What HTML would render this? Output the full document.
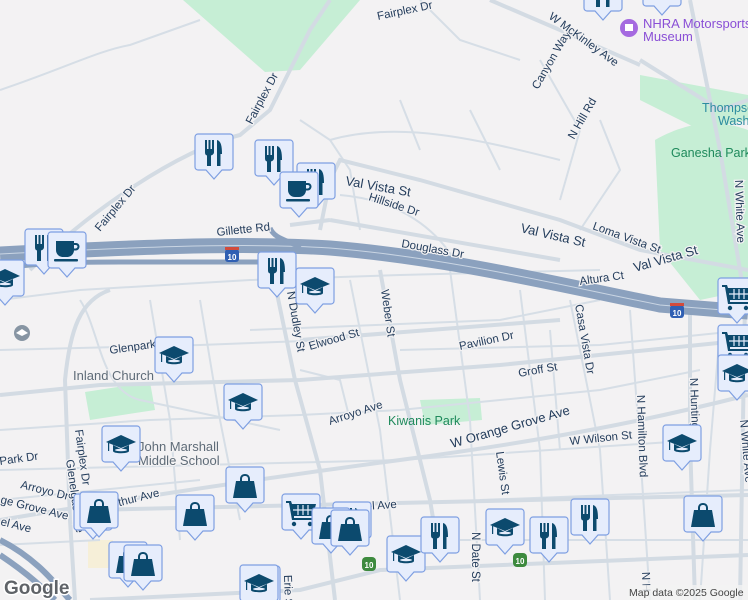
<!DOCTYPE html>
<html><head><meta charset="utf-8"><style>
html,body{margin:0;padding:0;width:748px;height:600px;overflow:hidden;background:#f3f2f3}
svg{display:block;overflow:hidden}
text{font-family:"Liberation Sans",sans-serif}
.l{fill:#243d5c;font-size:11.5px;stroke:#f3f2f3;stroke-width:2.5px;paint-order:stroke}
.r{fill:none;stroke:#d6dee6;stroke-width:2}
.m{fill:none;stroke:#d3dbe3;stroke-width:4}
</style></head><body>
<svg width="748" height="600" viewBox="0 0 748 600" xmlns="http://www.w3.org/2000/svg">
<defs>
<clipPath id="c"><rect width="748" height="600"/></clipPath>
<g id="pin"><path d="M3,0H35a3,3 0 0 1 3,3V33a3,3 0 0 1-3,3H27L19,45L11,36H3a3,3 0 0 1-3-3V3a3,3 0 0 1 3-3z" fill="#e6edfc" stroke="#7e9fe2" stroke-width="1.2"/></g>
<g id="fork"><use href="#pin"/><g fill="#0c4a6e"><path d="M10,6h2v9h1.5V6h2v9h1.5V6h2v12c0,2-1.5,3-3,3.5V32h-4V21.5c-1.5-.5-2-1.5-2-3.5z"/><path d="M22,6c4,1 5,6 5,14h-1.5V32h-3.5z"/></g></g>
<g id="cup"><use href="#pin"/><g fill="#0c4a6e"><path d="M8,9h18v9c0,4-3,7-7,7h-4c-4,0-7-3-7-7z"/><path d="M26,11h2c2.5,0 3.5,2 3.5,3.5s-1,4-4,4h-2v-2h2c1,0 2-1 2-2s-1-1.5-2-1.5h-1.5z"/><rect x="6" y="27" width="24" height="2.5" rx="1"/></g></g>
<g id="edu"><use href="#pin"/><g fill="#0c4a6e"><path d="M19,9L34,16L19,22L4,16z"/><path d="M11,19v6c0,3 16,3 16,0v-6l-8,4z"/><rect x="6" y="17" width="1.2" height="8"/></g><ellipse cx="19" cy="24" rx="6" ry="1.3" fill="#e6edfc"/></g>
<g id="bag"><use href="#pin"/><g fill="#0c4a6e"><path d="M10,14h18l3,17H7z"/><path d="M14,15v-3c0-3 2-5 5-5s5,2 5,5v3h-2v-3c0-2-1-3-3-3s-3,1-3,3v3z"/></g></g>
<g id="cart"><use href="#pin"/><g fill="#0c4a6e"><path d="M4,7h5l1,3h24l-3,12H12v2h18v2H10l-3-17H4z"/><circle cx="12" cy="30" r="2.2"/><circle cx="28" cy="30" r="2.2"/></g><g stroke="#e6edfc" stroke-width="1.2"><path d="M16,11v10M21,11v10M26,11v10M11,16h21"/></g></g>
</defs>
<g clip-path="url(#c)">
<rect width="748" height="600" fill="#f3f2f3"/>
<path d="M183,0H360L300,70L265,72z" fill="#c6eed5"/>
<path d="M655,140C690,120 720,120 748,130V290L700,300L660,250z" fill="#c6eed5"/>
<path d="M640,75L748,95V120L700,130L640,100z" fill="#c6eed5"/>
<path d="M85,392L150,382L155,410L90,420z" fill="#c6eed5"/>
<path d="M420,400L480,398L482,420L425,425z" fill="#c6eed5"/>
<rect x="88" y="540" width="25" height="28" fill="#f6efd8"/>
<g class="r">
<path d="M0,90C60,70 100,50 130,45L200,20"/><path d="M0,300L80,290L250,280L400,275L600,270"/>
<path d="M80,300C100,330 100,390 140,400L280,430"/><path d="M0,350L200,345L330,340"/>
<path d="M0,430L150,420L300,415L400,410L500,400L600,390L700,370"/>
<path d="M200,300L220,420L240,520"/><path d="M350,280L380,430L400,600"/>
<path d="M450,270L470,420L480,600"/><path d="M520,290L540,450L545,600"/>
<path d="M570,300L600,450L610,600"/><path d="M630,310L640,450L650,600"/>
<path d="M150,300L170,420L180,540"/><path d="M0,500L100,490L200,480"/>
<path d="M300,120L330,140L350,170L360,230"/><path d="M330,140C400,120 480,140 560,160"/>
<path d="M340,195C400,200 440,230 460,270"/><path d="M400,100L420,150"/>
<path d="M470,110L500,170"/><path d="M540,60L580,130L560,200"/>
<path d="M600,120L620,170L580,230"/><path d="M420,0L460,40L520,60"/>
<path d="M0,470L400,460L700,440"/><path d="M0,545L100,540"/>
<path d="M250,330L500,320L600,300"/><path d="M400,350L600,345L748,330"/>
<path d="M550,330L560,450"/><path d="M480,500L748,490"/><path d="M460,540L748,540"/>
<path d="M300,370L340,380L350,420"/><path d="M720,330L710,450L700,600"/>
</g>
<g class="m">
<path d="M0,520C120,500 250,480 400,460C550,440 650,420 748,395"/>
<path d="M90,600L300,590L380,570L748,555"/>
<path d="M90,510L748,495"/>
<path d="M270,260L295,380L320,470L335,600"/>
<path d="M380,270L400,380L430,500L440,560"/>
<path d="M110,290C80,300 70,330 65,380L70,520L75,600"/>
<path d="M30,270C90,210 180,150 240,135L270,110L310,30L330,0"/>
<path d="M320,230L330,180L340,160L420,180L560,220L640,250L748,270"/>
<path d="M290,225L330,220"/><path d="M330,220L560,260"/>
<path d="M0,395L100,385L300,380L500,365L748,340"/>
<path d="M300,340L560,320"/><path d="M640,60L720,110L748,100"/>
<path d="M490,0L560,30L640,65"/><path d="M690,0L720,150L745,300L740,600"/>
<path d="M690,310L690,440L695,600"/>
</g>
<path d="M0,254C120,248 240,242 330,248C450,258 560,285 660,305L748,312" fill="none" stroke="#8ba1be" stroke-width="15"/>
<path d="M0,254C120,248 240,242 330,248C450,258 560,285 660,305L748,312" fill="none" stroke="#c9d5e3" stroke-width="1"/>
<path d="M0,268C50,262 90,262 120,262L260,262" fill="none" stroke="#8ba1be" stroke-width="5"/>
<path d="M270,228C275,240 290,240 300,248" fill="none" stroke="#8ba1be" stroke-width="5"/>
<path d="M0,540C40,560 60,590 70,600M0,555C30,575 45,590 55,600" fill="none" stroke="#8ba1be" stroke-width="6"/>
<g><rect x="225" y="249" width="14" height="13" rx="3" fill="#2f5fb3"/><rect x="225" y="247" width="14" height="3" fill="#d24b3c"/><text x="232" y="260" font-size="8" fill="#fff" text-anchor="middle" font-weight="bold">10</text></g>
<g><rect x="670" y="305" width="14" height="13" rx="3" fill="#2f5fb3"/><rect x="670" y="303" width="14" height="3" fill="#d24b3c"/><text x="677" y="316" font-size="8" fill="#fff" text-anchor="middle" font-weight="bold">10</text></g>
<g><rect x="362" y="557" width="14" height="14" rx="4" fill="#3d8a3e"/><text x="369" y="568" font-size="8" fill="#fff" text-anchor="middle" font-weight="bold">10</text></g>
<g><rect x="513" y="553" width="14" height="14" rx="4" fill="#3d8a3e"/><text x="520" y="564" font-size="8" fill="#fff" text-anchor="middle" font-weight="bold">10</text></g>
<text class="l" transform="translate(378,20) rotate(-12)">Fairplex Dr</text>
<text class="l" transform="translate(252,125) rotate(-62)">Fairplex Dr</text>
<text class="l" transform="translate(100,232) rotate(-50)">Fairplex Dr</text>
<text class="l" transform="translate(217,236) rotate(-6)">Gillette Rd</text>
<text class="l" transform="translate(345,185) rotate(10)" style="font-size:13px">Val Vista St</text>
<text class="l" transform="translate(368,200) rotate(18)">Hillside Dr</text>
<text class="l" transform="translate(401,247) rotate(10)">Douglass Dr</text>
<text class="l" transform="translate(520,232) rotate(13)" style="font-size:13px">Val Vista St</text>
<text class="l" transform="translate(592,229) rotate(20)">Loma Vista St</text>
<text class="l" transform="translate(635,272) rotate(-16)" style="font-size:13px">Val Vista St</text>
<text class="l" transform="translate(580,285) rotate(-8)">Altura Ct</text>
<text class="l" transform="translate(381,290) rotate(82)">Weber St</text>
<text class="l" transform="translate(287,292) rotate(80)">N Dudley St</text>
<text class="l" transform="translate(310,350) rotate(-16)">Elwood St</text>
<text class="l" transform="translate(110,354) rotate(-8)">Glenpark St</text>
<text class="l" transform="translate(460,350) rotate(-12)">Pavilion Dr</text>
<text class="l" transform="translate(519,377) rotate(-10)">Groff St</text>
<text class="l" transform="translate(330,425) rotate(-18)">Arroyo Ave</text>
<text class="l" transform="translate(452,448) rotate(-16)" style="font-size:13px">W Orange Grove Ave</text>
<text class="l" transform="translate(570,445) rotate(-6)">W Wilson St</text>
<text class="l" transform="translate(496,452) rotate(82)">Lewis St</text>
<text class="l" transform="translate(575,305) rotate(80)">Casa Vista Dr</text>
<text class="l" transform="translate(637,395) rotate(88)">N Hamilton Blvd</text>
<text class="l" transform="translate(690,378) rotate(88)">N Huntington</text>
<text class="l" transform="translate(740,420) rotate(85)">N White Ave</text>
<text class="l" transform="translate(735,180) rotate(88)">N White Ave</text>
<text class="l" transform="translate(538,90) rotate(-60)">Canyon Way</text>
<text class="l" transform="translate(574,140) rotate(-60)">N Hill Rd</text>
<text class="l" transform="translate(548,18) rotate(36)">W McKinley Ave</text>
<text class="l" transform="translate(0,465) rotate(-8)">Park Dr</text>
<text class="l" transform="translate(20,488) rotate(14)">Arroyo Dr</text>
<text class="l" transform="translate(0,503) rotate(14)">ge Grove Ave</text>
<text class="l" transform="translate(0,525) rotate(14)">el Ave</text>
<text class="l" transform="translate(108,509) rotate(-14)">Arthur Ave</text>
<text class="l" transform="translate(75,430) rotate(82)">Fairplex Dr</text>
<text class="l" transform="translate(66,460) rotate(82)">Glenelgas Ave</text>
<text class="l" transform="translate(366,510) rotate(-4)">el Ave</text>
<text class="l" transform="translate(472,532) rotate(90)">N Date St</text>
<text class="l" transform="translate(284,575) rotate(88)">Erie St</text>
<text class="l" transform="translate(642,572) rotate(88)">N H</text>
<text class="l" x="700" y="528">n St</text>
<text x="73" y="380" fill="#5f6c78" font-size="13" style="stroke:#f3f2f3;stroke-width:2.5px;paint-order:stroke">Inland Church</text>
<text x="138" y="451" fill="#5f6c78" font-size="13" style="stroke:#f3f2f3;stroke-width:2.5px;paint-order:stroke">John Marshall</text>
<text x="138" y="465" fill="#5f6c78" font-size="13" style="stroke:#f3f2f3;stroke-width:2.5px;paint-order:stroke">Middle School</text>
<text x="388" y="425" fill="#1f8a5c" font-size="12.5">Kiwanis Park</text>
<text x="643" y="28" fill="#8a4fd6" font-size="13">NHRA Motorsports</text>
<text x="643" y="41" fill="#8a4fd6" font-size="13">Museum</text>
<circle cx="629" cy="28" r="9" fill="#a56ae0"/><rect x="625" y="24" width="8" height="7" fill="#fff"/>
<text x="702" y="112" fill="#2d8ca0" font-size="12.5">Thompson</text>
<text x="718" y="125" fill="#2d8ca0" font-size="12.5">Wash</text>
<text x="671" y="157" fill="#1f8a5c" font-size="12.5">Ganesha Park</text>
<circle cx="22" cy="333" r="8" fill="#8795a3"/><path d="M16,333l6-4l6,4l-6,3z" fill="#fff"/>
<use href="#fork" x="584" y="-25"/><use href="#edu" x="643" y="-30"/>
<use href="#fork" x="195" y="134"/>
<use href="#fork" x="297" y="163"/>
<use href="#fork" x="255" y="140"/>
<use href="#cup" x="280" y="172"/>
<use href="#fork" x="25" y="229"/>
<use href="#cup" x="48" y="232"/>
<use href="#edu" x="-14" y="260"/>
<use href="#fork" x="258" y="252"/>
<use href="#edu" x="296" y="268"/>
<use href="#edu" x="155" y="337"/>
<use href="#edu" x="224" y="384"/>
<use href="#edu" x="102" y="426"/>
<use href="#bag" x="226" y="467"/>
<use href="#edu" x="663" y="425"/>
<use href="#cart" x="718" y="278"/>
<use href="#cart" x="718" y="325"/>
<use href="#edu" x="718" y="355"/>
<use href="#bag" x="74" y="494"/>
<use href="#bag" x="80" y="492"/>
<use href="#bag" x="176" y="495"/>
<use href="#cart" x="282" y="494"/>
<use href="#fork" x="333" y="502"/>
<use href="#bag" x="312" y="508"/>
<use href="#bag" x="331" y="510"/>
<use href="#bag" x="109" y="542"/>
<use href="#bag" x="124" y="545"/>
<use href="#edu" x="242" y="566"/>
<use href="#edu" x="240" y="565"/>
<use href="#edu" x="387" y="536"/>
<use href="#fork" x="421" y="517"/>
<use href="#edu" x="486" y="509"/>
<use href="#fork" x="530" y="517"/>
<use href="#fork" x="571" y="499"/>
<use href="#bag" x="684" y="496"/>
<text x="4" y="594" font-size="19" font-weight="bold" fill="#5f6368" style="stroke:#fff;stroke-width:3px;paint-order:stroke">Google</text>
<rect x="627" y="585" width="121" height="15" fill="#f3f2f3" opacity="0.8"/>
<text x="629" y="596" font-size="10.5" fill="#444">Map data ©2025 Google</text>
</g>
</svg>
</body></html>
